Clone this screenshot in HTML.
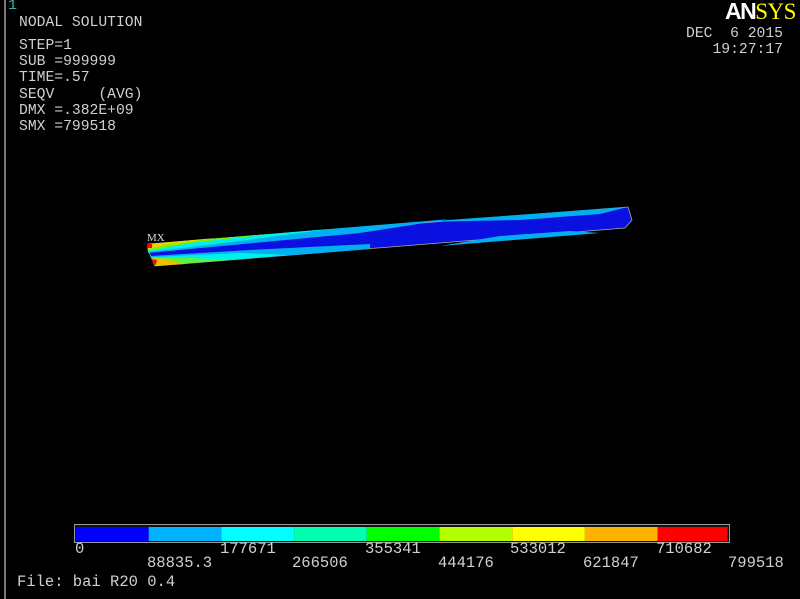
<!DOCTYPE html>
<html><head><style>
body{margin:0;width:800px;height:599px;background:#000;overflow:hidden;position:relative;font-family:"Liberation Mono",monospace;color:#d0d0d0;font-size:14.7px}
.t{position:absolute;white-space:pre;line-height:16.2px}
.l{font-size:15.5px}
</style></head><body>
<div style="position:absolute;left:4px;top:0;width:2px;height:599px;background:#777"></div>
<div class="t" style="left:8px;top:-2px;color:#2ab7b7;font-size:15px">1</div>
<div class="t" style="left:19px;top:15px">NODAL SOLUTION</div>
<div class="t" style="left:19px;top:38px">STEP=1
SUB =999999
TIME=.57
SEQV     (AVG)
DMX =.382E+09
SMX =799518</div>
<div class="t" style="left:686px;top:26px">DEC  6 2015
   19:27:17</div>
<div class="t" style="left:725px;top:-2px;font-family:'Liberation Sans',sans-serif;font-weight:bold;font-size:23px;line-height:26px;letter-spacing:-1.5px"><span style="color:#fff">AN</span><span style="color:#ff0;font-family:'Liberation Serif',serif;font-weight:normal;letter-spacing:-0.5px">SYS</span></div>
<svg style="position:absolute;left:0;top:0" width="800" height="599">
<polygon points="148,244 628,207 632,220 625,228 155,266 148,250" fill="#0a10e0" stroke="#aaa" stroke-width="0.8"/>
<polygon points="148,244 450,219 360,233 148,253" fill="#00b0f0"/>
<polygon points="148,244 330,229 240,241 148,252" fill="#00f0e8"/>
<polygon points="148,244 270,234 190,243 148,251" fill="#7ef000"/>
<polygon points="148,244 215,238 165,245 148,249" fill="#f0d000"/>
<polygon points="155,266 370,249 370,244 250,250 150,256" fill="#00b0f0"/>
<polygon points="155,266 290,255 240,253 151,257" fill="#00f0e8"/>
<polygon points="155,266 230,260 190,258 152,258" fill="#60f040"/>
<polygon points="155,266 185,264 165,259 152,258" fill="#f0c000"/>
<polygon points="420,222 628,207 600,214 520,220" fill="#00b0f0"/>
<polygon points="440,246 600,233 570,231 500,236" fill="#00b0f0"/>
<polygon points="148,244 152,244 152,248 148,248" fill="#f00"/>
<polygon points="152,259 157,260 156,265 153,264" fill="#e02000"/>
<text x="147" y="241" fill="#ddd" font-family="Liberation Serif,serif" font-size="11">MX</text>
<rect x="74.5" y="524.5" width="655" height="18" fill="#111" stroke="#999"/>
<rect x="76" y="527" width="72.7" height="14" fill="#0000ff"/>
<rect x="148.7" y="527" width="72.7" height="14" fill="#00b2ff"/>
<rect x="221.4" y="527" width="72.7" height="14" fill="#00ffff"/>
<rect x="294.1" y="527" width="72.7" height="14" fill="#00ffb2"/>
<rect x="366.8" y="527" width="72.7" height="14" fill="#00ff00"/>
<rect x="439.5" y="527" width="72.7" height="14" fill="#b2ff00"/>
<rect x="512.2" y="527" width="72.7" height="14" fill="#ffff00"/>
<rect x="584.9" y="527" width="72.7" height="14" fill="#ffb200"/>
<rect x="657.6" y="527" width="70" height="14" fill="#ff0000"/>
</svg>
<div class="t l" style="left:75px;top:541px">0</div>
<div class="t l" style="left:147px;top:555px">88835.3</div>
<div class="t l" style="left:220px;top:541px">177671</div>
<div class="t l" style="left:292px;top:555px">266506</div>
<div class="t l" style="left:365px;top:541px">355341</div>
<div class="t l" style="left:438px;top:555px">444176</div>
<div class="t l" style="left:510px;top:541px">533012</div>
<div class="t l" style="left:583px;top:555px">621847</div>
<div class="t l" style="left:656px;top:541px">710682</div>
<div class="t l" style="left:728px;top:555px">799518</div>
<div class="t l" style="left:17px;top:574px">File: bai R20 0.4</div>
</body></html>
